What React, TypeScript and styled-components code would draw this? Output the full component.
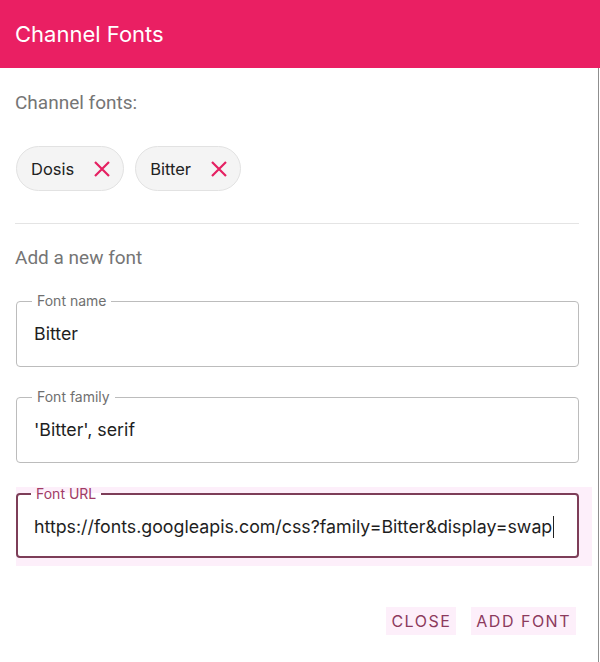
import * as React from "react";
import styled, { createGlobalStyle } from "styled-components";

const GlobalStyle = createGlobalStyle`
  html, body {
    margin: 0;
    padding: 0;
    background: #fff;
  }
`;

const sans = `Inter, "Liberation Sans", Arial, sans-serif`;
const roboto = `Roboto, "Liberation Sans", Arial, sans-serif`;

const Dialog = styled.div`
  width: 600px;
  height: 662px;
  display: flex;
  flex-direction: column;
  font-family: ${sans};
`;

const Header = styled.header`
  height: 68px;
  background-color: #ea1f63;
  color: #fff;
  display: flex;
  align-items: center;
  padding: 0 15px;
  font-size: 22px;
  font-weight: 400;
  box-sizing: border-box;
`;

const Body = styled.div`
  flex: 1;
  width: 599px;
  border-right: 1px solid #8f8f8f;
  box-sizing: border-box;
  padding: 23px 19px 0 15px;
  display: flex;
  flex-direction: column;
`;

const SectionLabel = styled.div`
  font-family: ${roboto};
  font-size: 19px;
  color: #757575;
  line-height: 24px;
`;

const ChipRow = styled.div`
  display: flex;
  gap: 11px;
  margin: 31px 0 0 1px;
`;

const Chip = styled.div`
  display: flex;
  align-items: center;
  height: 45px;
  box-sizing: border-box;
  padding: 0 12px 0 14px;
  border: 1px solid #e2e2e2;
  border-radius: 23px;
  background: #f4f4f4;
  font-size: 16.5px;
  color: #222;
  gap: 19px;
`;

const Divider = styled.hr`
  border: none;
  border-top: 1px solid #e4e4e4;
  margin: 32px 0 0 0;
`;

const AddLabel = styled(SectionLabel)`
  margin-top: 22px;
`;

const FieldSet = styled.fieldset<{ $focused?: boolean }>`
  margin: 0;
  padding: 0 0 0 ${(p) => (p.$focused ? "16px" : "17px")};
  border: ${(p) => (p.$focused ? "2px solid #7d3d58" : "1px solid #bcbcbc")};
  border-radius: 4px;
  height: ${(p) => (p.$focused ? "71px" : "73px")};
  box-sizing: border-box;
  background: #fff;
`;

const Legend = styled.legend<{ $focused?: boolean }>`
  margin-left: ${(p) => (p.$focused ? "-3px" : "-2px")};
  padding: 0 5px;
  font-size: 14px;
  line-height: 14px;
  color: ${(p) => (p.$focused ? "#a13b66" : "#6f6f6f")};
`;

const Value = styled.div`
  font-size: 17.8px;
  line-height: 24px;
  color: #1e1e1e;
  white-space: nowrap;
  padding-top: 14px;
  display: flex;
  align-items: center;
`;

const Caret = styled.span`
  display: inline-block;
  width: 1px;
  height: 22px;
  background: #222;
  margin-left: 1px;
`;

const FieldGroup = styled.div`
  display: flex;
  flex-direction: column;
  gap: 23px;
  margin-top: 24px;
  margin-left: 1px;
`;

const FocusGlow = styled.div`
  background: #fdeffa;
  padding: 0 13px 8px 0;
  margin-right: -13px;
  margin-top: 1px;
`;

const Actions = styled.div`
  display: flex;
  justify-content: flex-end;
  gap: 15px;
  margin-top: 41px;
  margin-right: 3px;
`;

const TextButton = styled.button`
  border: none;
  background: #fdeffa;
  color: #8c3a5d;
  font-family: ${sans};
  font-size: 16px;
  letter-spacing: 1.5px;
  text-transform: uppercase;
  padding: 4px 5px 4px 5px;
  cursor: pointer;
`;

const CloseIcon = () => (
  <svg width="18" height="18" viewBox="0 0 18 18">
    <path
      d="M2 2 L16 16 M16 2 L2 16"
      stroke="#e52162"
      strokeWidth="2.2"
      strokeLinecap="butt"
    />
  </svg>
);

const Field = ({
  label,
  value,
  focused,
}: {
  label: string;
  value: string;
  focused?: boolean;
}) => (
  <FieldSet $focused={focused}>
    <Legend $focused={focused}>{label}</Legend>
    <Value>
      {value}
      {focused && <Caret />}
    </Value>
  </FieldSet>
);

const fonts = ["Dosis", "Bitter"];

export default function App() {
  return (
    <>
      <GlobalStyle />
      <Dialog>
        <Header>Channel Fonts</Header>
        <Body>
          <SectionLabel>Channel fonts:</SectionLabel>
          <ChipRow>
            {fonts.map((f) => (
              <Chip key={f}>
                {f}
                <CloseIcon />
              </Chip>
            ))}
          </ChipRow>
          <Divider />
          <AddLabel>Add a new font</AddLabel>
          <FieldGroup>
            <Field label="Font name" value="Bitter" />
            <Field label="Font family" value="'Bitter', serif" />
            <FocusGlow>
              <Field
                label="Font URL"
                value="https://fonts.googleapis.com/css?family=Bitter&display=swap"
                focused
              />
            </FocusGlow>
          </FieldGroup>
          <Actions>
            <TextButton>Close</TextButton>
            <TextButton>Add font</TextButton>
          </Actions>
        </Body>
      </Dialog>
    </>
  );
}
